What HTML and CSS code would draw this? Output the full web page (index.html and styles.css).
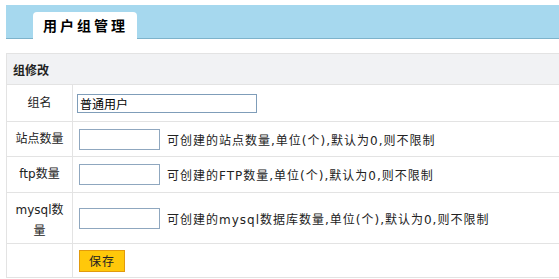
FILE: index.html
```html
<!DOCTYPE html>
<html lang="zh-CN">
<head>
    <meta charset="UTF-8">
    <title>用户组管理</title>
    <link rel="stylesheet" href="styles.css">
</head>
<body>
    <div class="page">
        <div class="tab-bar">
            <div class="tab">用户组管理</div>
        </div>

        <table class="form-table">
            <tr class="caption">
                <td colspan="2">组修改</td>
            </tr>
            <tr class="row-name">
                <td class="label">组名</td>
                <td class="field"><input class="input-name" type="text" value="普通用户"></td>
            </tr>
            <tr>
                <td class="label">站点数量</td>
                <td class="field"><input class="input-num" type="text"><span class="hint">可创建的站点数量,单位(个),默认为0,则不限制</span></td>
            </tr>
            <tr class="row-tall">
                <td class="label">ftp数量</td>
                <td class="field"><input class="input-num" type="text"><span class="hint">可创建的FTP数量,单位(个),默认为0,则不限制</span></td>
            </tr>
            <tr class="row-mysql">
                <td class="label">mysql数量</td>
                <td class="field"><input class="input-num" type="text"><span class="hint">可创建的mysql数据库数量,单位(个),默认为0,则不限制</span></td>
            </tr>
            <tr class="row-save">
                <td class="label"></td>
                <td class="field"><button class="btn-save">保存</button></td>
            </tr>
        </table>
    </div>
</body>
</html>
```

FILE: styles.css
```css
* {
    margin: 0;
    padding: 0;
    box-sizing: border-box;
}

body {
    font-family: "DejaVu Sans", "Noto Sans CJK SC", sans-serif;
    font-size: 12px;
    color: #222;
    background: #fff;
    overflow: hidden;
}

.page {
    padding: 5px 0 0 6px;
}

.tab-bar {
    display: flex;
    align-items: flex-end;
    height: 34px;
    background-color: #a6d8ee;
    border-bottom: 1px solid #7db3cb;
    padding-left: 27px;
}

.tab {
    height: 27px;
    margin-bottom: -1px;
    padding: 0 9px 0 10px;
    background: #fff;
    border-radius: 4px 4px 0 0;
    font-family: "Noto Sans CJK SC", sans-serif;
    font-size: 14px;
    font-weight: bold;
    letter-spacing: 3px;
    line-height: 27px;
    color: #000;
}

.form-table {
    margin-top: 14px;
    width: 100%;
    border-collapse: collapse;
    border: 1px solid #e3e3e3;
    border-right: none;
}

.form-table td {
    border-bottom: 1px solid #e3e3e3;
    vertical-align: middle;
}

.caption td {
    height: 31px;
    padding-left: 6px;
    background: #f1f2f4;
    font-weight: bold;
    font-family: "Noto Sans CJK SC", sans-serif;
}

.label {
    width: 66px;
    padding: 0 8px;
    text-align: center;
    border-right: 1px solid #e3e3e3;
    line-height: 21px;
}

.field {
    padding: 0 6px;
    height: 35px;
}

.row-name .field {
    height: 37px;
}

.row-tall .field {
    height: 36px;
}

.row-mysql .field {
    height: 51px;
}

.row-mysql .label {
    padding-top: 6px;
}

.row-save .field {
    height: 34px;
}

.input-name {
    width: 180px;
    height: 19px;
    margin-left: -2px;
    border: 1px solid #7f9db9;
    padding: 0 2px;
    font-family: "Noto Sans CJK SC", sans-serif;
    font-size: 12px;
    color: #000;
}

.input-num {
    width: 81px;
    height: 21px;
    border: 1px solid #8fa7bf;
    vertical-align: middle;
}

.hint {
    margin-left: 7px;
    letter-spacing: 1px;
    vertical-align: middle;
}

.btn-save {
    width: 46px;
    height: 22px;
    background: #ffc80a;
    border: 1px solid #e29a0c;
    font-family: "Noto Sans CJK SC", sans-serif;
    font-size: 12px;
    letter-spacing: 1px;
    color: #222;
}
```
